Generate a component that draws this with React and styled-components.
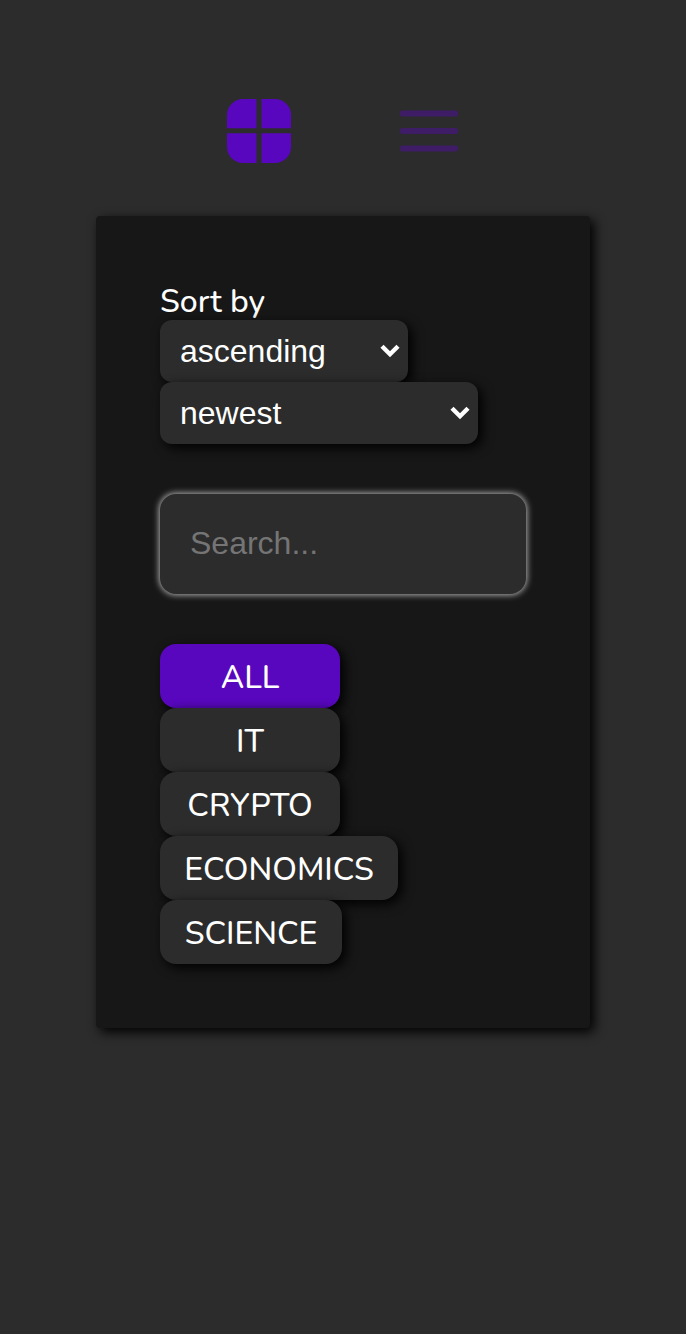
import React from 'react';
import styled, { createGlobalStyle } from 'styled-components';

const GlobalStyle = createGlobalStyle`
  * { box-sizing: border-box; }
  body {
    margin: 0;
    background: #2c2c2c;
    color: #fff;
    font-family: Nunito, Lato, sans-serif;
    font-size: 32px;
    font-weight: 500;
  }
`;

const Page = styled.main`
  min-height: 1334px;
  padding: 99px 96px 0;
`;

const ViewSwitch = styled.nav`
  display: flex;
  justify-content: center;
  gap: 104px;
  height: 117px;
`;

const ViewButton = styled.button`
  width: 64px;
  height: 64px;
  padding: 0;
  border: 0;
  background: none;
  color: ${({ $active }) => ($active ? '#5807be' : '#3e1c66')};

  svg { display: block; }
`;

const Panel = styled.section`
  height: 812px;
  padding: 64px;
  border-radius: 4px;
  background: #171717;
  box-shadow: 4px 4px 12px #000;
`;

const Group = styled.div`
  display: flex;
  flex-direction: column;
  align-items: flex-start;
`;

const Label = styled.span`
  height: 40px;
  line-height: 43px;
  white-space: nowrap;
`;

const SelectBox = styled.div`
  display: flex;
  align-items: center;
  position: relative;
  width: ${({ $width }) => $width}px;
  height: 62px;
  border-radius: 12px;
  background: #2c2c2c;
  box-shadow: 4px 4px 12px #000;

  svg {
    position: absolute;
    right: 8px;
    top: 24px;
    pointer-events: none;
  }
`;

const Select = styled.select`
  appearance: none;
  width: 100%;
  height: 100%;
  padding: 0 20px;
  border: 0;
  border-radius: inherit;
  background: transparent;
  color: #fff;
  font: 32px "Liberation Sans", Arial, sans-serif;
`;

const Search = styled.input`
  display: block;
  width: 366px;
  height: 100px;
  margin: 50px 0;
  padding: 0 30px 2px;
  border: 0;
  border-radius: 16px;
  background: #2c2c2c;
  box-shadow: 0 0 6px 1px #b4b4b4;
  color: #fff;
  font: 32px "Liberation Sans", Arial, sans-serif;

  &::placeholder { color: #757575; }
`;

const Category = styled.button`
  display: flex;
  align-items: center;
  justify-content: center;
  width: ${({ $width }) => $width}px;
  height: 64px;
  padding: 2px 0 0;
  border: 0;
  border-radius: 16px;
  background: ${({ $active }) => ($active ? '#5807be' : '#2c2c2c')};
  box-shadow: 4px 4px 12px #000;
  color: #fff;
  font: inherit;
`;

const GridIcon = () => (
  <svg width="64" height="64" viewBox="0 0 64 64" fill="currentColor">
    <path d="M29.5 0v29.3H0V16A16 16 0 0 1 16 0z" />
    <path d="M34.5 0H48a16 16 0 0 1 16 16v13.3H34.5z" />
    <path d="M0 34.3h29.5V64H16A16 16 0 0 1 0 48z" />
    <path d="M34.5 34.3H64V48a16 16 0 0 1-16 16H34.5z" />
  </svg>
);

const ListIcon = () => (
  <svg width="64" height="64" viewBox="0 0 64 64" fill="none" stroke="currentColor" strokeWidth="6" strokeLinecap="round">
    <path d="M7.7 14.5h52.6M7.7 32h52.6M7.7 49.5h52.6" />
  </svg>
);

const Chevron = () => (
  <svg width="20" height="14" viewBox="0 0 20 14" fill="none" stroke="#fff" strokeWidth="4.4">
    <path d="M2 2.2l8 8 8-8" />
  </svg>
);

const Dropdown = ({ width, options }) => (
  <SelectBox $width={width}>
    <Select>
      {options.map((o) => <option key={o}>{o}</option>)}
    </Select>
    <Chevron />
  </SelectBox>
);

const categories = [
  { name: 'ALL', width: 180, active: true },
  { name: 'IT', width: 180 },
  { name: 'CRYPTO', width: 180 },
  { name: 'ECONOMICS', width: 238 },
  { name: 'SCIENCE', width: 182 },
];

export default function App() {
  return (
    <>
      <GlobalStyle />
      <Page>
        <ViewSwitch>
          <ViewButton $active aria-label="Grid view"><GridIcon /></ViewButton>
          <ViewButton aria-label="List view"><ListIcon /></ViewButton>
        </ViewSwitch>
        <Panel>
          <Group>
            <Label>Sort by</Label>
            <Dropdown width={248} options={['ascending', 'descending']} />
            <Dropdown width={318} options={['newest', 'oldest']} />
          </Group>
          <Search type="text" placeholder="Search..." />
          <Group>
            {categories.map((c) => (
              <Category key={c.name} $width={c.width} $active={c.active}>
                {c.name}
              </Category>
            ))}
          </Group>
        </Panel>
      </Page>
    </>
  );
}
